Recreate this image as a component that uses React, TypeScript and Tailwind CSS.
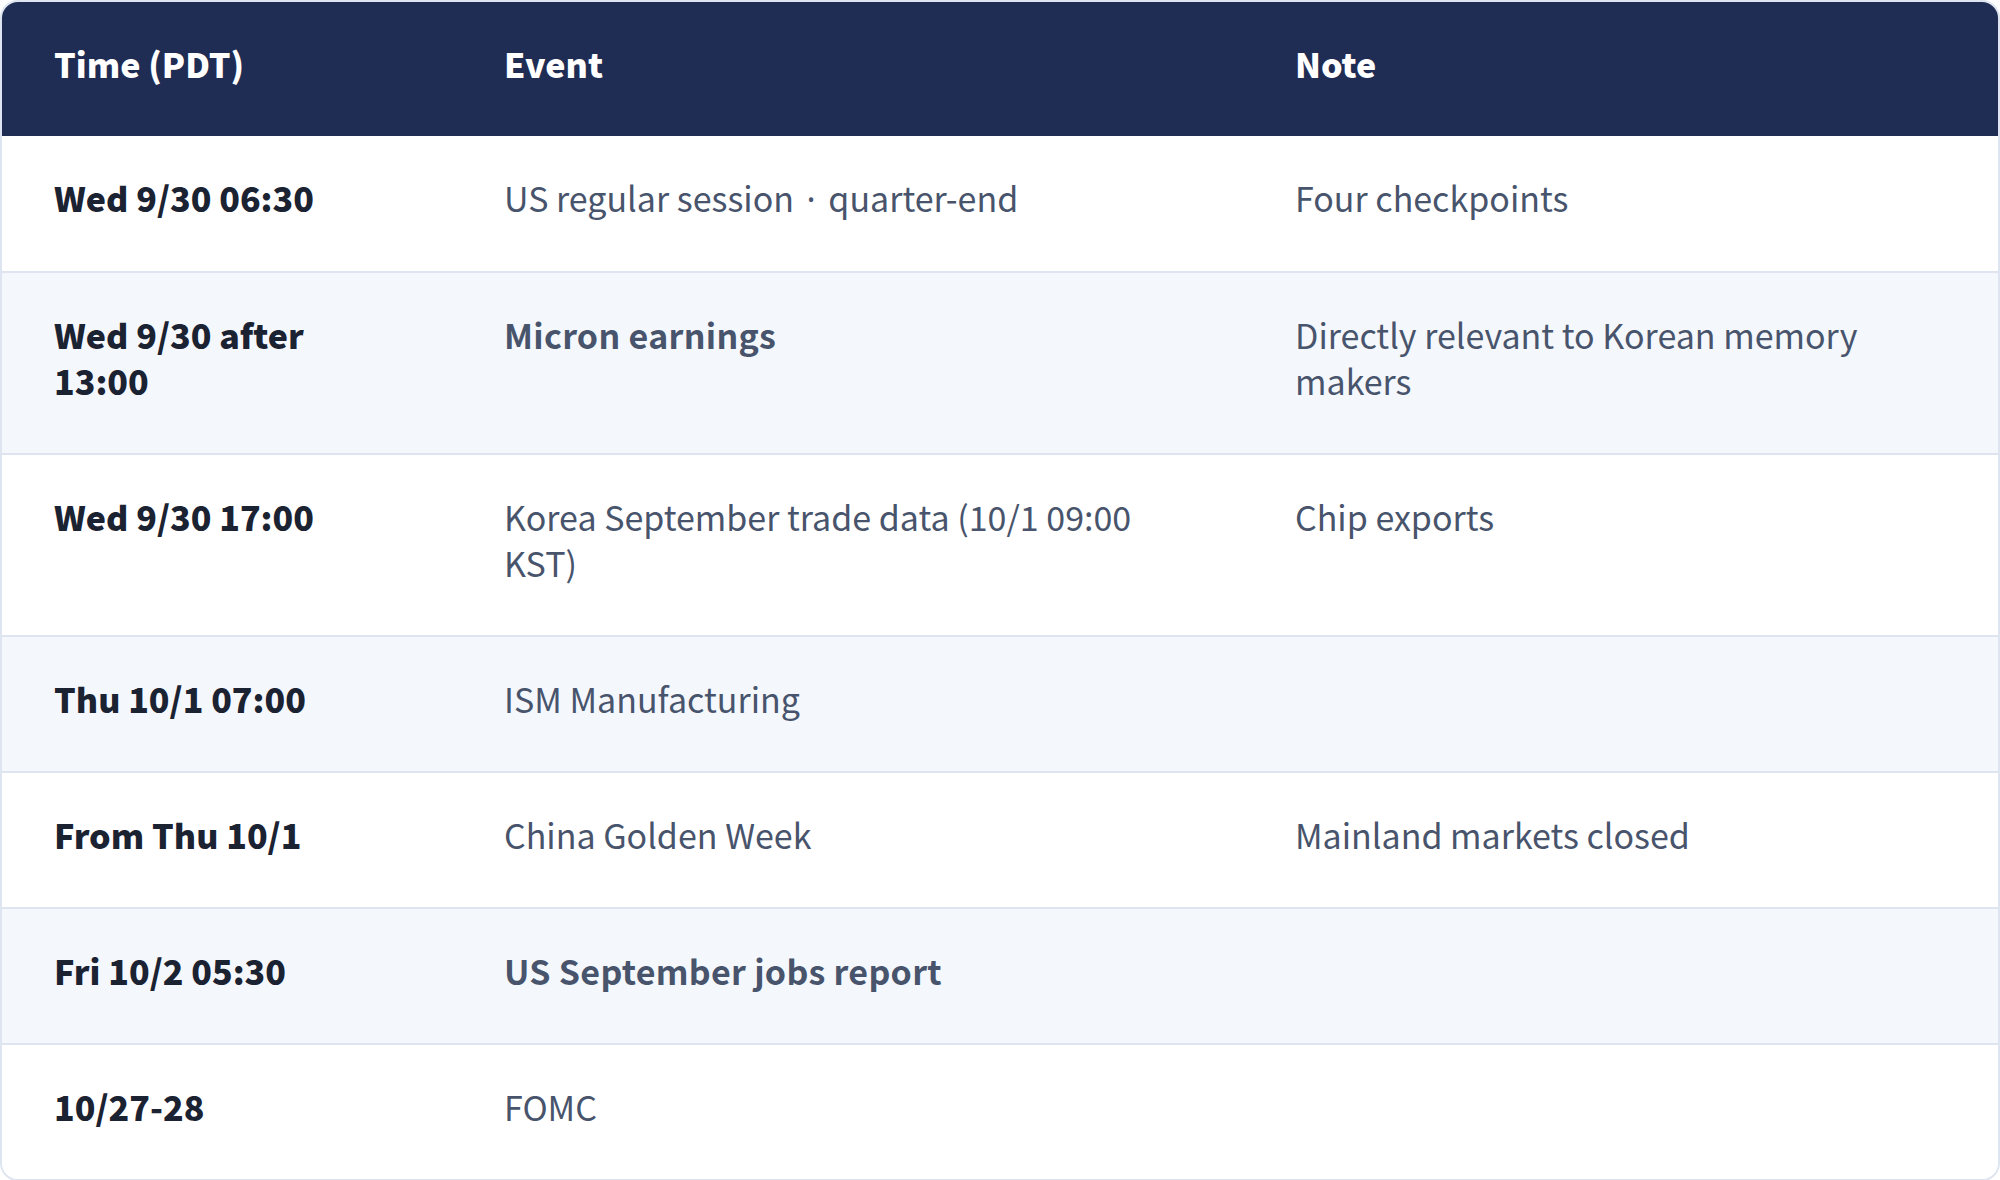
const rows = [
  { time: "Wed 9/30 06:30", event: "US regular session · quarter-end", note: "Four checkpoints" },
  { time: "Wed 9/30 after 13:00", event: "Micron earnings", note: "Directly relevant to Korean memory makers", strong: true },
  { time: "Wed 9/30 17:00", event: "Korea September trade data (10/1 09:00 KST)", note: "Chip exports" },
  { time: "Thu 10/1 07:00", event: "ISM Manufacturing", note: "" },
  { time: "From Thu 10/1", event: "China Golden Week", note: "Mainland markets closed" },
  { time: "Fri 10/2 05:30", event: "US September jobs report", note: "", strong: true },
  { time: "10/27-28", event: "FOMC", note: "" },
];

export default function App() {
  return (
    <div className="w-[2000px] bg-white" style={{ fontFamily: '"Noto Sans CJK KR", "Noto Sans", sans-serif' }}>
      <div className="overflow-hidden rounded-[18px] border-2 border-[#dee4f0]">
        <table className="w-full table-fixed border-collapse text-[34px] leading-[46px]">
          <colgroup>
            <col className="w-[450px]" />
            <col className="w-[791px]" />
            <col />
          </colgroup>
          <thead>
            <tr className="bg-[#1f2c53] text-left text-white">
              <th className="px-[52px] pt-[39px] pb-[49px] font-extrabold">Time (PDT)</th>
              <th className="px-[52px] pt-[39px] pb-[49px] font-extrabold">Event</th>
              <th className="px-[52px] pt-[39px] pb-[49px] font-extrabold">Note</th>
            </tr>
          </thead>
          <tbody>
            {rows.map((row, i) => (
              <tr
                key={row.time}
                className={`${i % 2 === 1 ? "bg-[#f4f7fc]" : "bg-white"} ${i < rows.length - 1 ? "border-b-2 border-[#dee4f0]" : ""}`}
              >
                <td className="px-[52px] pt-[39px] pb-[49px] align-top font-extrabold text-[#1b2231]">{row.time}</td>
                <td className={`px-[52px] pt-[39px] pb-[49px] align-top text-[#48546c] ${row.strong ? "font-bold tracking-[0.3px]" : ""}`}>
                  {row.event.includes("·") ? (
                    <>
                      {row.event.split("·")[0]}
                      <span className="mx-[5px] font-['Noto_Sans']">·</span>
                      {row.event.split("·")[1]}
                    </>
                  ) : (
                    row.event
                  )}
                </td>
                <td className="px-[52px] pt-[39px] pb-[49px] align-top text-[#48546c]">{row.note}</td>
              </tr>
            ))}
          </tbody>
        </table>
      </div>
    </div>
  );
}
